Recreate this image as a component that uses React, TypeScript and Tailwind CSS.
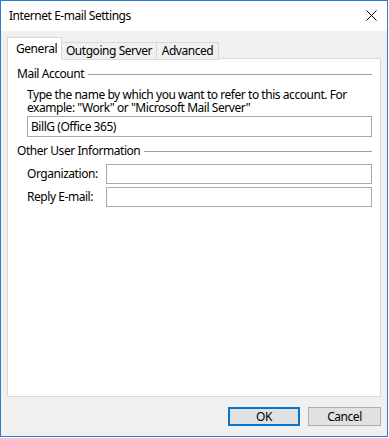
import React from "react";

const font = { fontFamily: '"Noto Sans", "Open Sans", sans-serif' };

const GroupHeader = ({ text }: { text: string }) => (
  <div className="flex items-center h-[16px] pl-[9px] pr-[8px]">
    <span>{text}</span>
    <div className="flex-1 ml-[4px] border-t border-[#a0a0a0]" />
  </div>
);

const Field = ({ label }: { label: string }) => (
  <div className="flex items-center h-[20px] pl-[19px] pr-[8px]">
    <span className="w-[79px] shrink-0">{label}</span>
    <div className="flex-1 h-[20px] bg-white border border-[#a9a9a9]" />
  </div>
);

export default function App() {
  return (
    <div
      className="w-[389px] h-[438px] bg-white text-[12px] tracking-[-0.45px] text-black leading-[16px]"
      style={font}
    >
      <div className="w-[388px] h-[437px] border border-[#2b7bd3] flex flex-col">
        <div className="h-[30px] bg-white flex items-center justify-between pl-[8px] pr-[10px] shrink-0">
          <span>Internet E-mail Settings</span>
          <svg width="11" height="11" viewBox="0 0 11 11" className="mb-[2px]">
            <path d="M0.5 0.5 L10.5 10.5 M10.5 0.5 L0.5 10.5" stroke="#000" strokeWidth="1" />
          </svg>
        </div>
        <div className="flex-1 bg-[#f0f0f0] flex flex-col px-[6px]">
          <div className="flex items-end pt-[6px] h-[28px] relative z-10 whitespace-nowrap">
            <div className="h-[22px] px-[8px] bg-white border border-b-0 border-[#d9d9d9] flex items-center w-[55px]">
              General
            </div>
            <div className="h-[18px] bg-[#f0f0f0] border border-l-0 border-[#d9d9d9] flex items-center w-[95px] mb-[-1px] justify-center">
              Outgoing Server
            </div>
            <div className="h-[18px] bg-[#f0f0f0] border border-l-0 border-[#d9d9d9] flex items-center w-[62px] mb-[-1px] justify-center">
              Advanced
            </div>
          </div>
          <div className="h-[339px] bg-white border border-[#d9d9d9] mt-[-1px] flex flex-col pt-[7px]">
            <GroupHeader text="Mail Account" />
            <div className="pl-[19px] pr-[8px] mt-[6px] leading-[13px]">
              Type the name by which you want to refer to this account. For example: "Work" or "Microsoft Mail Server"
            </div>
            <div className="pl-[19px] pr-[8px] mt-[2px]">
              <div className="h-[21px] bg-white border border-[#a9a9a9] flex items-center px-[3px]">BillG (Office 365)</div>
            </div>
            <div className="mt-[6px]">
              <GroupHeader text="Other User Information" />
            </div>
            <div className="mt-[5px] flex flex-col gap-[3px]">
              <Field label="Organization:" />
              <Field label="Reply E-mail:" />
            </div>
          </div>
          <div className="flex justify-end gap-[8px] pt-[10px]">
            <button className="w-[72px] h-[19px] bg-[#e1e1e1] border-2 border-[#0078d7] flex items-center justify-center">
              OK
            </button>
            <button className="w-[73px] h-[19px] bg-[#e1e1e1] border border-[#adadad] flex items-center justify-center">
              Cancel
            </button>
          </div>
        </div>
      </div>
    </div>
  );
}
